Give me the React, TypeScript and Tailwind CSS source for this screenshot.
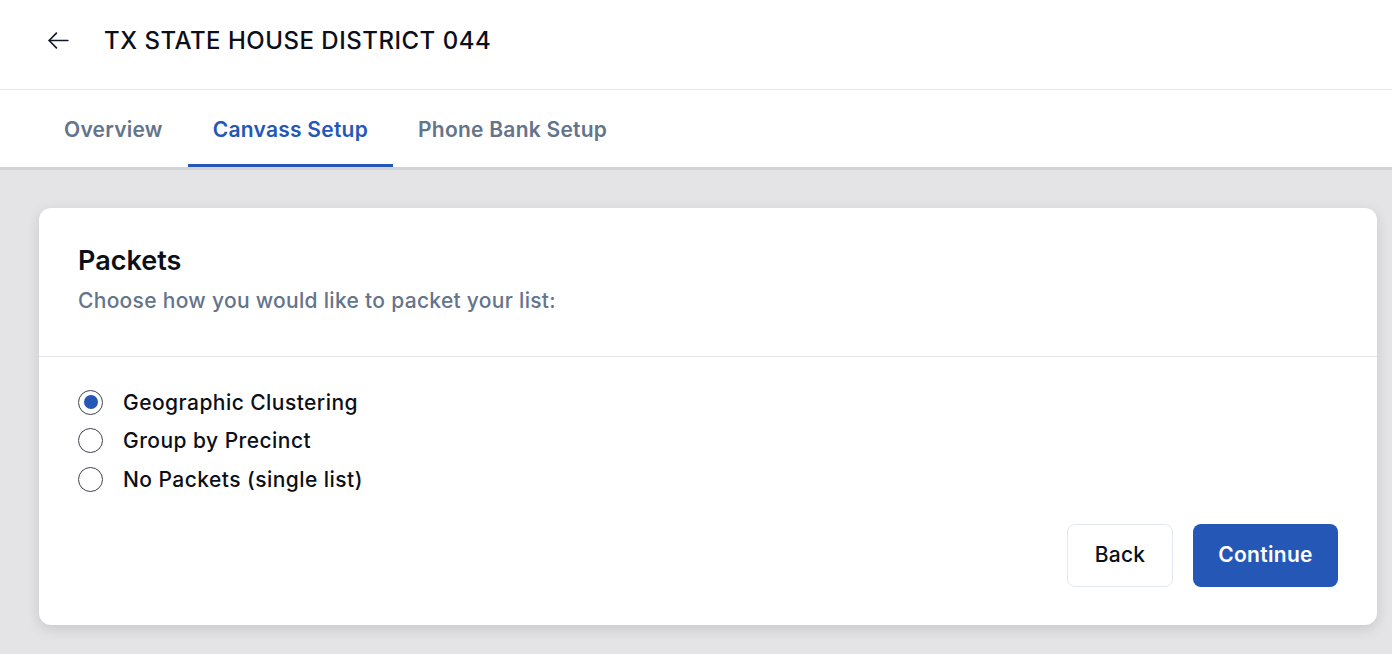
import React, { useState } from "react";

const font = { fontFamily: "Inter, 'Noto Sans', 'Liberation Sans', sans-serif" };

function Radio({ checked, label, onClick }: { checked: boolean; label: string; onClick: () => void }) {
  return (
    <button onClick={onClick} className="flex items-center gap-[20px] h-[38.5px] text-left">
      <span className="w-[25px] h-[25px] rounded-full border-[1.5px] border-[#3f4451] flex items-center justify-center bg-white">
        {checked && <span className="w-[14px] h-[14px] rounded-full bg-[#2557b7]" />}
      </span>
      <span className="text-[21px] font-medium text-[#0b0f19] tracking-[0.45px]">{label}</span>
    </button>
  );
}

export default function App() {
  const [sel, setSel] = useState(0);
  const opts = ["Geographic Clustering", "Group by Precinct", "No Packets (single list)"];
  const tabs = ["Overview", "Canvass Setup", "Phone Bank Setup"];
  return (
    <div style={font} className="min-h-[654px] bg-[#e4e4e7] flex flex-col">
      <header className="h-[90px] bg-white border-b border-[#e5e7eb] flex items-center pl-[46px] gap-[33px] pb-[8px]">
        <svg width="25" height="25" viewBox="0 0 24 24" fill="none" stroke="#111827" strokeWidth="1.6" strokeLinecap="round" strokeLinejoin="round">
          <path d="M21 12H3" />
          <path d="M10 5l-7 7 7 7" />
        </svg>
        <h1 className="text-[24px] font-medium text-[#0b0f19] tracking-[0.5px]">TX STATE HOUSE DISTRICT 044</h1>
      </header>
      <nav className="h-[80px] bg-white border-b-[3px] border-[#d1d3d9] flex pl-[39px]">
        {tabs.map((t, i) => (
          <div
            key={t}
            className={
              "px-[25px] flex items-center text-[21px] font-semibold tracking-[0.25px] border-b-[3px] pt-[6px] " +
              (i === 1 ? "text-[#2557b7] border-[#2557b7]" : "text-[#64748b] border-transparent")
            }
          >
            {t}
          </div>
        ))}
      </nav>
      <main className="pl-[39px] pr-[15px] pt-[38px] pb-[29px]">
        <div className="bg-white rounded-[12px] shadow-[0_4px_14px_rgba(0,0,0,0.12)]">
          <div className="px-[39px] pt-[36px] pb-[40px] border-b border-[#e5e7eb]">
            <h2 className="text-[27px] font-semibold text-[#0b0f19] leading-[34px]">Packets</h2>
            <p className="text-[21px] font-medium text-[#64748b] mt-[8px] leading-[30px] tracking-[0.3px]">Choose how you would like to packet your list:</p>
          </div>
          <div className="px-[39px] pt-[26px] pb-[38px]">
            <div className="flex flex-col">
              {opts.map((o, i) => (
                <Radio key={o} label={o} checked={sel === i} onClick={() => setSel(i)} />
              ))}
            </div>
            <div className="flex justify-end gap-[20px] mt-[25px]">
              <button className="h-[63px] w-[106px] rounded-[8px] border border-[#e2e8f0] bg-white text-[21px] font-medium text-[#0b0f19] tracking-[0.2px]">Back</button>
              <button className="h-[63px] w-[145px] rounded-[8px] bg-[#2557b7] text-[21px] font-semibold text-white tracking-[0.3px]">Continue</button>
            </div>
          </div>
        </div>
      </main>
    </div>
  );
}
